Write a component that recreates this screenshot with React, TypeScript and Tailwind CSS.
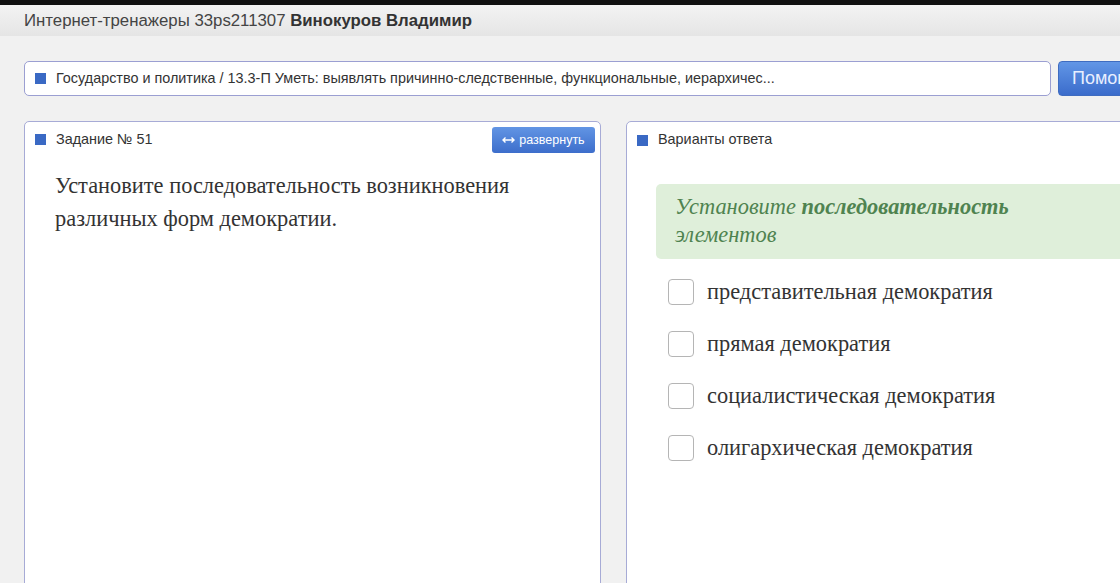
import React from "react";

const options = [
  "представительная демократия",
  "прямая демократия",
  "социалистическая демократия",
  "олигархическая демократия",
];

function Square() {
  return <span className="inline-block h-[11px] w-[11px] shrink-0 bg-[#3a69c4]" />;
}

export default function App() {
  return (
    <div
      className="h-[583px] w-[1120px] overflow-hidden bg-[#f1f1f1]"
      style={{ fontFamily: '"Liberation Sans", Arial, sans-serif' }}
    >
      <div className="h-[5px] bg-[#111]" />
      <div className="flex h-[31px] items-center bg-gradient-to-b from-[#f3f3f3] to-[#e5e5e5] pl-[24px] text-[16.8px] text-[#444]">
        Интернет-тренажеры 33ps211307&nbsp;<b className="text-[#333]">Винокуров Владимир</b>
      </div>

      <div className="flex w-[1300px] gap-[7px] pl-[24px] pt-[25px]">
        <div className="flex h-[35px] w-[1027px] items-center gap-[10px] rounded-[5px] border border-[#9b9fd2] bg-white pl-[10px] text-[14.4px] text-[#333]">
          <Square />
          <span className="whitespace-nowrap">
            Государство и политика / 13.3-П Уметь: выявлять причинно-следственные, функциональные, иерархичес...
          </span>
        </div>
        <div className="flex h-[35px] w-[100px] items-center rounded-[4px] border border-[#3f6cc0] bg-gradient-to-b from-[#6296e6] to-[#3b6ccb] pl-[13px] text-[18px] text-[#e8efff]">
          Помощь
        </div>
      </div>

      <div className="flex w-[1300px] gap-[25px] pl-[24px] pt-[25px]">
        <div className="h-[470px] w-[577px] rounded-t-[5px] border border-[#a7abd6] bg-white">
          <div className="flex h-[34px] items-center justify-between pl-[10px] pr-[5px] pt-[2px]">
            <div className="flex items-center gap-[10px] text-[14.4px] text-[#333]">
              <Square />
              <span>Задание № 51</span>
            </div>
            <div className="flex h-[26px] w-[103px] items-center justify-center gap-[4px] rounded-[3px] bg-gradient-to-b from-[#6295e4] to-[#3d6ecb] text-[12.5px] text-white">
              <svg width="13" height="8" viewBox="0 0 13 8" fill="none" stroke="white" strokeWidth="1.4">
                <path d="M1 4h11M3.5 1.5 1 4l2.5 2.5M9.5 1.5 12 4 9.5 6.5" />
              </svg>
              <span>развернуть</span>
            </div>
          </div>
          <p
            className="px-[30px] pt-[13px] text-[22.4px] leading-[33px] text-[#333]"
            style={{ fontFamily: '"Liberation Serif", "Times New Roman", serif' }}
          >
            Установите последовательность возникновения различных форм демократии.
          </p>
        </div>

        <div className="h-[470px] w-[577px] rounded-t-[5px] border border-[#a7abd6] bg-white">
          <div className="flex h-[34px] items-center gap-[10px] pl-[10px] pt-[2px] text-[14.4px] text-[#333]">
            <Square />
            <span>Варианты ответа</span>
          </div>
          <div
            className="pl-[29px] pt-[28px]"
            style={{ fontFamily: '"Liberation Serif", "Times New Roman", serif' }}
          >
            <div className="h-[75px] rounded-l-[5px] bg-[#dfefda] pl-[19px] pt-[9px] text-[22.4px] italic leading-[28px] text-[#4f8350]">
              Установите <b>последовательность</b>
              <br />
              элементов
            </div>
            <div className="flex flex-col gap-[26px] pl-[12px] pt-[20px]">
              {options.map((o) => (
                <div key={o} className="flex h-[26px] items-center gap-[13px] text-[22.4px] text-[#333]">
                  <span className="h-[26px] w-[26px] shrink-0 rounded-[4px] border border-[#b5b5b5] bg-white" />
                  <span>{o}</span>
                </div>
              ))}
            </div>
          </div>
        </div>
      </div>
    </div>
  );
}
